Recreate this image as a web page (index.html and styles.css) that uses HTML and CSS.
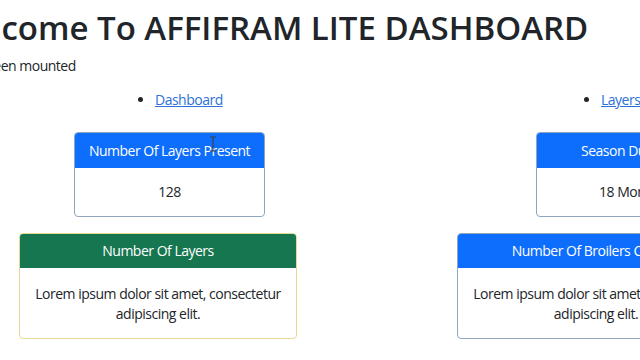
FILE: index.html
```html
<!DOCTYPE html>
<html lang="en">
<head>
    <meta charset="UTF-8">
    <meta name="viewport" content="width=device-width, initial-scale=1.0">
    <title>Affifram Lite Dashboard</title>
    <link rel="stylesheet" href="styles.css">
</head>
<body>
    <div class="page">
        <h1 class="title">Welcome To AFFIFRAM LITE DASHBOARD</h1>
        <p class="status">App has been mounted</p>

        <div class="row nav-row">
            <ul class="nav-col">
                <li><a href="#">Dashboard</a></li>
            </ul>
            <ul class="nav-col">
                <li><a href="#">Layers</a></li>
            </ul>
        </div>

        <div class="row stat-row">
            <div class="card stat-card">
                <div class="card-header bg-blue">Number Of Layers Present</div>
                <div class="card-body">128</div>
            </div>
            <div class="card stat-card">
                <div class="card-header bg-blue">Season Duration</div>
                <div class="card-body">18 Months</div>
            </div>
        </div>

        <div class="row info-row">
            <div class="card info-card border-yellow">
                <div class="card-header bg-green">Number Of Layers</div>
                <div class="card-body">Lorem ipsum dolor sit amet, consectetur adipiscing elit.</div>
            </div>
            <div class="card info-card">
                <div class="card-header bg-blue">Number Of Broilers Coming</div>
                <div class="card-body">Lorem ipsum dolor sit amet, consectetur adipiscing elit.</div>
            </div>
        </div>
    </div>

    <svg class="cursor" width="8" height="16" viewBox="0 0 8 16">
        <path d="M1 1h2.5l0.5 0.6 0.5-0.6H7M4 1.6v12.8M1 15h2.5l0.5-0.6 0.5 0.6H7" fill="none" stroke="#3a3f44" stroke-width="1.1"/>
    </svg>
</body>
</html>
```

FILE: styles.css
```css
body {
    margin: 0;
    font-family: "Open Sans", "Noto Sans", sans-serif;
    font-size: 14px;
    letter-spacing: -0.5px;
    color: #212529;
    background: #fff;
    overflow: hidden;
    position: relative;
}
.page {
    width: 1400px;
    margin-left: -58px;
    padding-top: 8px;
}
.title {
    margin: 0;
    font-size: 33px;
    font-weight: 600;
    line-height: 40px;
    letter-spacing: 0;
    white-space: nowrap;
}
.status {
    margin: 8px 0 0 -9px;
    line-height: 20px;
}
.row {
    display: flex;
    align-items: flex-start;
}
.nav-row {
    margin-top: 14px;
    padding-left: 181px;
}
.nav-col {
    flex: none;
    width: 446px;
    margin: 0;
    padding-left: 32px;
    box-sizing: border-box;
    line-height: 20px;
}
.nav-col a {
    color: #2d72d9;
}
.stat-row {
    margin-top: 22px;
    padding-left: 132px;
    gap: 271px;
}
.info-row {
    margin-top: 16px;
    padding-left: 77px;
    gap: 160px;
}
.card {
    flex: none;
    box-sizing: border-box;
    border: 1px solid #8fa6be;
    border-radius: 4px;
    overflow: hidden;
    text-align: center;
    background: #fff;
}
.stat-card {
    width: 191px;
}
.info-card {
    width: 278px;
}
.card-header {
    color: #fff;
    padding: 8px 10px;
    line-height: 19px;
    white-space: nowrap;
}
.card-body {
    padding: 14px 10px;
    line-height: 20px;
}
.info-card .card-header {
    line-height: 18px;
}
.info-card .card-body {
    padding: 16px 10px 14px;
}
.bg-blue {
    background: #0d6efd;
}
.bg-green {
    background: #157650;
}
.border-yellow {
    border-color: #e4da94;
}
.cursor {
    position: absolute;
    left: 209px;
    top: 136px;
}
```
